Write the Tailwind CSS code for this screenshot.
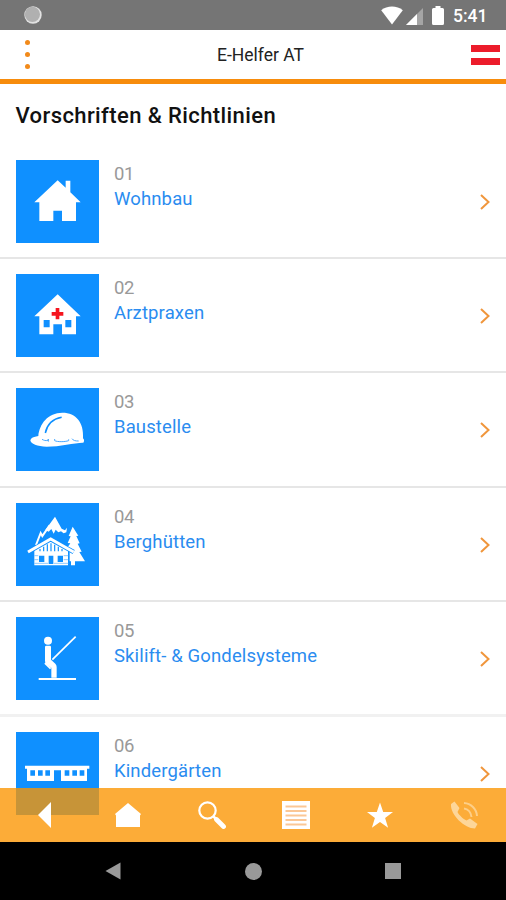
<!DOCTYPE html>
<html lang="de">
<head>
    <meta charset="UTF-8">
    <meta name="viewport" content="width=device-width, initial-scale=1.0">
    <title>E-Helfer AT</title>
    <script src="https://cdn.jsdelivr.net/npm/@tailwindcss/browser@4"></script>
</head>
<body class="bg-white font-[Roboto,sans-serif]">
    <div class="relative w-full h-[900px] overflow-hidden flex flex-col">
        <!-- Status bar -->
        <div class="h-[30px] shrink-0 bg-[#757575] flex items-center justify-between pl-6 pr-5">
            <svg class="w-[18px] h-[18px]" viewBox="0 0 18 18">
                <circle cx="9" cy="9" r="8.7" fill="#e2e2e2" />
                <circle cx="8.4" cy="8.3" r="7.6" fill="#b0b0b0" />
            </svg>
            <div class="flex items-center">
                <svg class="w-[22px] h-[19px]" viewBox="0 0 22 19" fill="#fff">
                    <path d="M11 18.5 0.2 4.2C6 -0.6 16 -0.6 21.8 4.2Z" />
                </svg>
                <svg class="w-[17px] h-[17px] ml-[3px] mt-0.5" viewBox="0 0 17 17">
                    <path d="M0 17 17 0V17Z" fill="#a5a5a5" />
                    <path d="M0 17 11 6V17Z" fill="#fff" />
                </svg>
                <svg class="w-[12px] h-[19px] ml-[9px]" viewBox="0 0 12 19" fill="#fff">
                    <path d="M3.5 0h5v2H10.500q1.500 0 1.500 1.500V17.500Q12 19 10.500 19h-9Q0 19 0 17.500V3.500Q0 2 1.500 2h2z" />
                </svg>
                <span class="ml-[9px] w-[33px] text-[17.500px] leading-none font-medium text-white whitespace-nowrap mt-[3px]">5:41</span>
            </div>
        </div>

        <!-- Header -->
        <header class="h-[54px] shrink-0 border-b-[5px] border-[#f78c0c] flex items-center justify-between pl-[25px] pr-[6px]">
            <div class="flex flex-col gap-[7px] w-[29px]">
                <span class="w-[5px] h-[5px] rounded-full bg-[#f28a1a]"></span>
                <span class="w-[5px] h-[5px] rounded-full bg-[#f28a1a]"></span>
                <span class="w-[5px] h-[5px] rounded-full bg-[#f28a1a]"></span>
            </div>
            <h1 class="text-[17.500px] leading-none text-[#222] ml-[-4px] mt-[3px]">E-Helfer AT</h1>
            <div class="w-[29px] h-[20px] border-y-[7px] border-[#ec1c2b]"></div>
        </header>

        <main class="h-[758px] shrink-0">
            <h2 class="h-[60.600px] pt-[18px] pl-[15.500px] text-[22px] leading-[28px] font-medium tracking-[0.400px] text-[#111]">Vorschriften &amp; Richtlinien</h2>

            <a class="flex h-[114.400px] pt-[15px] pl-4 pr-4 border-b-2 border-[#e6e6e6]">
                <svg class="w-[83px] h-[83px] shrink-0 bg-[#0f90ff]" viewBox="0 0 249 249">
                    <path d="M125 61 149 83V62h14v35l31 30h-14v56h-42v-31h-26v31H70v-56H55z" fill="#fff" />
                </svg>
                <div class="ml-[15px] grow pt-px">
                    <p class="text-[18.500px] leading-[26px] text-[#999] tracking-[-0.500px]">01</p>
                    <p class="text-[18.500px] leading-[25px] tracking-[0.130px] text-[#2a8cf0]">Wohnbau</p>
                </div>
                <svg class="w-[10px] h-[16px] mt-[34px]" viewBox="0 0 10 16" fill="none" stroke="#f0963c" stroke-width="2"><path d="M1 1 8.500 8 1 15" /></svg>
            </a>

            <a class="flex h-[114.400px] pt-[15px] pl-4 pr-4 border-b-2 border-[#e6e6e6]">
                <svg class="w-[83px] h-[83px] shrink-0 bg-[#0f90ff]" viewBox="0 0 249 249">
                    <path d="M125 61 194 127h-14v54h-42v-30h-26v30H70v-54H55z" fill="#fff" />
                    <path d="M83 138h18v22H83zM148 138h18v22h-18z" fill="#0f90ff" />
                    <path d="M119 102h11v12h12v11h-12v11h-11v-11h-12v-11h12z" fill="#f5141e" />
                </svg>
                <div class="ml-[15px] grow pt-px">
                    <p class="text-[18.500px] leading-[26px] text-[#999] tracking-[-0.500px]">02</p>
                    <p class="text-[18.500px] leading-[25px] tracking-[0.130px] text-[#2a8cf0]">Arztpraxen</p>
                </div>
                <svg class="w-[10px] h-[16px] mt-[34px]" viewBox="0 0 10 16" fill="none" stroke="#f0963c" stroke-width="2"><path d="M1 1 8.500 8 1 15" /></svg>
            </a>

            <a class="flex h-[114.400px] pt-[15px] pl-4 pr-4 border-b-2 border-[#e6e6e6]">
                <svg class="w-[83px] h-[83px] shrink-0 bg-[#0f90ff]" viewBox="0 0 249 249">
                    <path d="M43 157q2-10 24-13C70 108 96 74 139 74c42 0 65 30 62 77q6 6 1 13c-22-1-70 12-110 12-28 0-48-9-49-19z" fill="#fff" />
                    <path d="M88 135c5-24 22-42 49-47" fill="none" stroke="#0f90ff" stroke-width="4.500" />
                    <path d="M78 154c6 3 10 5 18 3l1-4v8M116 153v5c8 4 30 4 42 0v-4M168 152c4 6 10 7 20 7" fill="none" stroke="#4aa9ff" stroke-width="3" />
                </svg>
                <div class="ml-[15px] grow pt-px">
                    <p class="text-[18.500px] leading-[26px] text-[#999] tracking-[-0.500px]">03</p>
                    <p class="text-[18.500px] leading-[25px] tracking-[0.130px] text-[#2a8cf0]">Baustelle</p>
                </div>
                <svg class="w-[10px] h-[16px] mt-[34px]" viewBox="0 0 10 16" fill="none" stroke="#f0963c" stroke-width="2"><path d="M1 1 8.500 8 1 15" /></svg>
            </a>

            <a class="flex h-[114.400px] pt-[15px] pl-4 pr-4 border-b-2 border-[#e6e6e6]">
                <svg class="w-[83px] h-[83px] shrink-0 bg-[#0f90ff]" viewBox="0 0 249 249">
                    <!-- mountains -->
                    <path d="M117 41 137 77l10 5 6-8-2 14-8 3-8-6-8 3-8-8-6 12-7-14-8 8-10-5z" fill="#fff" />
                    <path d="M60 126 74 90l5 9 22-32" fill="none" stroke="#fff" stroke-width="6" />
                    <!-- fir tree -->
                    <path d="M170 71 187 98l-6 1 10 22-6 1 12 24-7 1 17 28h-30v12h-12v-12h-4v-34l-6-8 8-12-8-1 9-20-6-1z" fill="#fff" />
                    <!-- hut -->
                    <path d="M104 109 55 136v51h101v-51z" fill="#fff" />
                    <path d="M36 147 104 109l69 38" fill="none" stroke="#0f90ff" stroke-width="13" />
                    <path d="M36 147 104 108l69 39" fill="none" stroke="#fff" stroke-width="9" />
                    <path d="M72 138v7M83 131v14M94 124v21M105 121v24M116 125v20M127 131v14M138 138v7" stroke="#0f90ff" stroke-width="3.500" />
                    <path d="M69 158h16v19H69zM98 158h14v25H98zM125 158h16v19h-16z" fill="#0f90ff" />
                    <path d="M55 158h12M55 170h12M143 158h14M143 170h14M55 181h41M114 181h43" stroke="#57afff" stroke-width="2" />
                </svg>
                <div class="ml-[15px] grow pt-px">
                    <p class="text-[18.500px] leading-[26px] text-[#999] tracking-[-0.500px]">04</p>
                    <p class="text-[18.500px] leading-[25px] tracking-[0.130px] text-[#2a8cf0]">Berghütten</p>
                </div>
                <svg class="w-[10px] h-[16px] mt-[34px]" viewBox="0 0 10 16" fill="none" stroke="#f0963c" stroke-width="2"><path d="M1 1 8.500 8 1 15" /></svg>
            </a>

            <a class="flex h-[114.400px] pt-[15px] pl-4 pr-4 border-b-3 border-[#f1f1f1]">
                <svg class="w-[83px] h-[83px] shrink-0 bg-[#0f90ff]" viewBox="0 0 249 249">
                    <circle cx="96" cy="71" r="12" fill="#fff" />
                    <path d="M87 90q0-4 4-4h10q4 0 4 4v38l13 12q4 4 4 10v32h-16v-30L92 142q-5-4-5-10z" fill="#fff" />
                    <path d="M87 138 104 155" stroke="#fff" stroke-width="6" />
                    <path d="M109 128 179 59" stroke="#fff" stroke-width="5" />
                    <path d="M68 186h112" stroke="#fff" stroke-width="6" />
                </svg>
                <div class="ml-[15px] grow pt-px">
                    <p class="text-[18.500px] leading-[26px] text-[#999] tracking-[-0.500px]">05</p>
                    <p class="text-[18.500px] leading-[25px] tracking-[0.130px] text-[#2a8cf0]">Skilift- &amp; Gondelsysteme</p>
                </div>
                <svg class="w-[10px] h-[16px] mt-[34px]" viewBox="0 0 10 16" fill="none" stroke="#f0963c" stroke-width="2"><path d="M1 1 8.500 8 1 15" /></svg>
            </a>

            <a class="flex h-[114.400px] pt-[15px] pl-4 pr-4">
                <svg class="w-[83px] h-[83px] shrink-0 bg-[#0f90ff]" viewBox="0 0 249 249">
                    <path d="M27 101h193v9h-7v37h-78v-32h-21v32H33v-37h-6z" fill="#fff" />
                    <path d="M43 115h14v16H43zM66 115h14v16H66zM88 115h14v16H88zM146 115h14v16h-14zM169 115h14v16h-14zM191 115h14v16h-14z" fill="#0f90ff" />
                </svg>
                <div class="ml-[15px] grow pt-px">
                    <p class="text-[18.500px] leading-[26px] text-[#999] tracking-[-0.500px]">06</p>
                    <p class="text-[18.500px] leading-[25px] tracking-[0.130px] text-[#2a8cf0]">Kindergärten</p>
                </div>
                <svg class="w-[10px] h-[16px] mt-[34px]" viewBox="0 0 10 16" fill="none" stroke="#f0963c" stroke-width="2"><path d="M1 1 8.500 8 1 15" /></svg>
            </a>
        </main>

        <!-- Translucent toolbar over the list -->
        <nav class="absolute inset-x-0 bottom-[58px] h-[54px] bg-[#fb9500]/78 pl-[2px] grid grid-cols-6 items-center justify-items-center">
            <svg class="w-[28px] h-[28px]" viewBox="0 0 28 28" fill="#fff"><path d="M21 1V27L8 14z" /></svg>
            <svg class="w-[28px] h-[28px]" viewBox="0 0 28 28" fill="#fff"><path d="M14 2 27 13l-1 1.500V26H2V14.500L1 13z" /></svg>
            <svg class="w-[28px] h-[28px]" viewBox="0 0 28 28" fill="none" stroke="#fff">
                <circle cx="9.500" cy="9.500" r="8.200" stroke-width="2.200" />
                <path d="M15.500 15.500 18 18" stroke-width="2.500" />
                <path d="M18.500 18.500 25.500 25.500" stroke-width="4.800" stroke-linecap="round" />
            </svg>
            <svg class="w-[28px] h-[28px]" viewBox="0 0 28 28">
                <path d="M0 0h28v28H0z" fill="#fff" />
                <path d="M3.500 5.500h21M3.500 10h21M3.500 14.500h21M3.500 19h21M3.500 23.500h21" stroke="#fbc795" stroke-width="2" />
            </svg>
            <svg class="w-[28px] h-[28px]" viewBox="0 0 28 28" fill="#fff"><path d="M14 1.500 17.200 11H27l-7.900 6 3 9.800L14 21l-8.100 5.800 3-9.800L1 11h9.800z" /></svg>
            <svg class="w-[28px] h-[28px]" viewBox="0 0 28 28">
                <path d="M1 3 4.500 0.500 9.500 7 7.500 11C9 14 13 18 16.500 19.500L20 17.500 27.500 23 25 27.500C15 27.500 0 14 1 3Z" fill="#fdd699" />
                <path d="M14 7.500c4 .500 7 4 7.500 8.500M14 2c7 .500 12.500 6 13 13" fill="none" stroke="#fdcf88" stroke-width="2" />
            </svg>
        </nav>

        <!-- System navigation -->
        <div class="h-[58px] shrink-0 bg-black flex items-center justify-between pl-[105px] pr-[105px]">
            <svg class="w-[16px] h-[18px]" viewBox="0 0 16 18" fill="#999"><path d="M15.500 0.500V17.500L0.500 9z" /></svg>
            <span class="w-[17px] h-[17px] rounded-full bg-[#999]"></span>
            <span class="w-4 h-4 bg-[#999]"></span>
        </div>
    </div>
</body>
</html>
